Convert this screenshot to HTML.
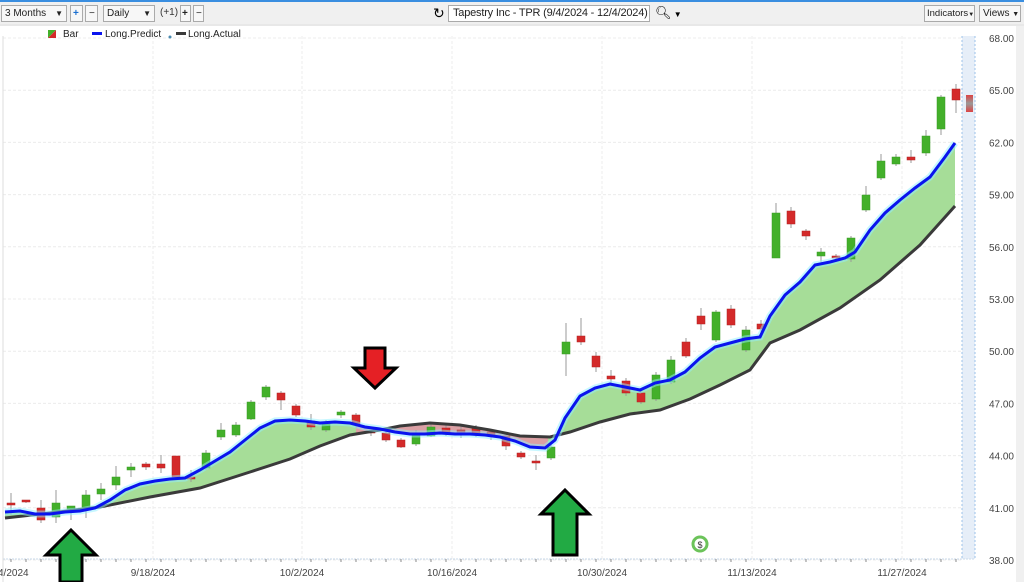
<!DOCTYPE html>
<html><head><meta charset="utf-8"><style>
body{margin:0;width:1024px;height:582px;overflow:hidden;background:#fff;font-family:"Liberation Sans",sans-serif;position:relative}
.tb{position:absolute;left:0;top:0;width:1024px;height:24px;background:#f0f0f0;border-top:2px solid #3a8ee0;box-sizing:border-box;font-size:10px}
.box{position:absolute;top:3px;height:17px;border:1px solid #aaa;background:#f7f7f7;box-sizing:border-box;line-height:15px;padding-left:3px;color:#222;white-space:nowrap;overflow:hidden}
svg{position:absolute;left:0;top:0}
</style></head><body>
<div class="tb">
<div class="box" style="left:1px;width:66px">3 Months<span style="position:absolute;right:3px;font-size:8px">▼</span></div>
<div class="box" style="left:70px;width:13px;color:#1a6fd0;font-weight:bold;padding-left:2px">+</div>
<div class="box" style="left:85px;width:13px;padding-left:3px">−</div>
<div class="box" style="left:103px;width:52px">Daily<span style="position:absolute;right:3px;font-size:8px">▼</span></div>
<div style="position:absolute;left:160px;top:5px;color:#333">(+1)</div>
<div class="box" style="left:180px;width:11px;padding-left:1px;font-weight:bold">+</div>
<div class="box" style="left:193px;width:11px;padding-left:2px">−</div>
<div style="position:absolute;left:433px;top:3px;font-size:14px">↻</div>
<div class="box" style="left:448px;width:202px;background:#fff;font-size:11px;padding-left:4px;letter-spacing:-0.2px">Tapestry Inc - TPR (9/4/2024 - 12/4/2024)</div>
<div style="position:absolute;left:655px;top:3px;font-size:13px">🔍︎<span style="font-size:8px"> ▼</span></div>
<div class="box" style="left:924px;width:51px;font-size:9.5px;padding-left:2px">Indicators<span style="font-size:6px">▼</span></div>
<div class="box" style="left:979px;width:42px">Views <span style="font-size:7px">▼</span></div>
</div>
<svg width="1024" height="582" id="s" font-family="Liberation Sans, sans-serif"></svg>
<script>
const y=p=>38+(68-p)*17.4;
let h='';
h+='<rect x="0" y="24" width="1024" height="558" fill="#fff"/>';
h+='<rect x="0" y="24" width="1024" height="2" fill="#e8e8e8"/>';
h+='<rect x="962" y="36" width="13" height="523" fill="#e6eef8"/><line x1="962" y1="36" x2="962" y2="559" stroke="#9cc3ea" stroke-dasharray="2,2"/><line x1="975" y1="36" x2="975" y2="559" stroke="#9cc3ea" stroke-dasharray="2,2"/>';
h+='<rect x="1016" y="26" width="8" height="556" fill="#f0f0f0"/>';
for(let p=38;p<=68;p+=3){let yy=y(p);h+=`<line x1="3" x2="962" y1="${yy}" y2="${yy}" stroke="#ececec" stroke-dasharray="3,2"/><text x="1014" y="${yy+4}" font-size="10" fill="#444" text-anchor="end">${p.toFixed(2)}</text>`;}
[[153,'9/18/2024'],[302,'10/2/2024'],[452,'10/16/2024'],[602,'10/30/2024'],[752,'11/13/2024'],[902,'11/27/2024']].forEach(([x,t])=>{h+=`<line x1="${x}" x2="${x}" y1="36" y2="562" stroke="#ececec" stroke-dasharray="3,2"/><text x="${x}" y="576" font-size="10" fill="#444" text-anchor="middle">${t}</text>`});
h+='<text x="-2" y="576" font-size="10" fill="#444">4/2024</text>';
h+='<line x1="3" x2="975" y1="559" y2="559" stroke="#c9d9ea" stroke-dasharray="2,1"/>';
for(let x=11;x<962;x+=15)h+=`<line x1="${x}" x2="${x}" y1="559" y2="562" stroke="#888"/>`;
h+='<line x1="3" x2="3" y1="36" y2="582" stroke="#ddd"/>';
const P=[[5,512],[20,511],[35,514],[50,514],[65,512],[80,511],[95,508],[110,500],[125,490],[140,484],[155,481],[170,479],[185,478],[200,470],[215,461],[230,452],[245,440],[260,428],[275,421],[290,420],[305,421],[320,423],[335,422],[350,423],[365,427],[380,429],[395,432],[410,434],[425,434],[440,433],[455,434],[470,434],[485,435],[500,437],[515,441],[530,447],[545,448],[555,440],[565,418],[580,396],[595,388],[610,384],[625,387],[640,390],[655,383],[670,380],[685,372],[700,358],[715,347],[730,343],[745,339],[760,337],[770,316],[785,295],[800,282],[815,265],[830,262],[845,258],[855,252],[870,230],[885,213],[900,200],[915,188],[930,177],[945,157],[955,143]];
const A=[[5,518],[50,513],[100,507],[150,497],[200,488],[250,472],[290,459],[320,446],[350,435],[380,430],[400,426],[430,423],[460,425],[490,430],[520,436],[550,437],[570,432],[600,422],[630,414],[660,410],[690,399],[720,385],[750,370],[770,343],[800,330],[840,308],[880,280],[920,245],[955,206]];
const pts=a=>a.map(p=>p.join(',')).join(' ');
const poly=pts(P)+' '+pts(A.slice().reverse());
h+=`<defs><clipPath id="c"><rect x="356" y="0" width="192" height="600"/></clipPath></defs>`;
h+=`<polygon points="${poly}" fill="#a6dd98"/><polygon points="${poly}" fill="#dba0a4" clip-path="url(#c)"/>`;
const C=[[11,503,505,493,515,'r'],[26,500,502,500,503,'r'],[41,508,520,500,523,'r'],[56,503,517,490,523,'g'],[71,506,509,506,520,'g'],[86,495,508,490,518,'g'],[101,489,494,483,500,'g'],[116,477,485,466,490,'g'],[131,467,470,463,477,'g'],[146,464,467,462,470,'r'],[161,464,468,455,473,'r'],[176,456,477,456,480,'r'],[191,477,479,470,482,'r'],[206,453,468,450,470,'g'],[221,430,437,423,440,'g'],[236,425,435,422,437,'g'],[251,402,419,400,420,'g'],[266,387,397,385,400,'g'],[281,393,400,391,410,'r'],[296,406,415,404,417,'r'],[311,421,427,414,430,'r'],[326,424,430,420,432,'g'],[341,412,415,410,418,'g'],[356,415,424,413,428,'r'],[371,431,433,428,436,'r'],[386,433,440,431,442,'r'],[401,440,447,438,448,'r'],[416,433,444,430,446,'g'],[431,427,436,424,437,'g'],[446,428,433,425,436,'r'],[461,430,432,424,438,'r'],[476,428,433,425,437,'r'],[491,432,436,430,440,'r'],[506,436,446,434,450,'r'],[521,453,457,451,459,'r'],[536,461,463,455,470,'r'],[551,447,458,444,460,'g'],[566,342,354,323,376,'g'],[581,336,342,318,345,'r'],[596,356,367,352,372,'r'],[611,376,379,370,386,'r'],[626,381,393,378,396,'r'],[641,393,402,390,404,'r'],[656,375,399,372,401,'g'],[671,360,382,356,384,'g'],[686,342,356,338,358,'r'],[701,316,324,308,330,'r'],[716,312,340,310,342,'g'],[731,309,325,305,328,'r'],[746,330,350,326,352,'g'],[761,324,329,320,332,'r'],[776,213,258,203,258,'g'],[791,211,224,207,228,'r'],[806,231,236,229,240,'r'],[821,252,256,248,262,'g'],[836,256,258,254,262,'r'],[851,238,259,236,262,'g'],[866,195,210,186,212,'g'],[881,161,178,154,180,'g'],[896,157,164,154,166,'g'],[911,157,160,150,163,'r'],[926,136,153,130,156,'g'],[941,97,129,95,135,'g'],[956,89,100,84,113,'r']];
C.forEach(([x,t,b,wt,wb,c])=>{const col=c=='g'?'#43b02a':'#d42a2a';h+=`<line x1="${x}" x2="${x}" y1="${wt}" y2="${wb}" stroke="#999"/><rect x="${x-4}" y="${t}" width="8" height="${Math.max(b-t,2)}" fill="${col}" stroke="${c=='g'?'#3a9a26':'#b02020'}" stroke-width="0.5"/>`});
h+='<linearGradient id="gg" x1="0" y1="0" x2="0" y2="1"><stop offset="0" stop-color="#d44"/><stop offset="0.5" stop-color="#999"/><stop offset="1" stop-color="#d44"/></linearGradient><rect x="966" y="95" width="7" height="17" fill="url(#gg)"/>';
h+=`<polyline points="${pts(A)}" fill="none" stroke="#3a3a3a" stroke-width="3"/>`;
h+=`<polyline points="${pts(P)}" fill="none" stroke="#8ff0ff" stroke-width="7" opacity="0.5"/><polyline points="${pts(P)}" fill="none" stroke="#0a14ee" stroke-width="3"/>`;
h+='<polygon points="365,348 385,348 385,368 396,368 375,388 354,368 365,368" fill="#e52025" stroke="#000" stroke-width="3"/>';
h+='<polygon points="71,530 96,555 82,555 82,582 60,582 60,555 46,555" fill="#22aa44" stroke="#000" stroke-width="3"/>';
h+='<polygon points="565,490 589,514 577,514 577,555 553,555 553,514 541,514" fill="#22aa44" stroke="#000" stroke-width="3"/>';
h+='<circle cx="700" cy="544" r="7" fill="none" stroke="#6cc35a" stroke-width="3"/><text x="700" y="548" font-size="9" text-anchor="middle" fill="#333">$</text>';
h+='<polygon points="48,30 56,30 48,38" fill="#43b02a"/><polygon points="56,30 56,38 48,38" fill="#d42a2a"/><text x="63" y="37" font-size="10" fill="#222">Bar</text>';
h+='<rect x="92" y="32" width="10" height="3" fill="#0a14ee"/><text x="105" y="37" font-size="10" fill="#222">Long.Predict</text><circle cx="170" cy="37" r="1.5" fill="#4a8ab0"/>';
h+='<rect x="176" y="32" width="10" height="3" fill="#3a3a3a"/><text x="188" y="37" font-size="10" fill="#222">Long.Actual</text>';
document.getElementById('s').innerHTML=h;
</script>
</body></html>
